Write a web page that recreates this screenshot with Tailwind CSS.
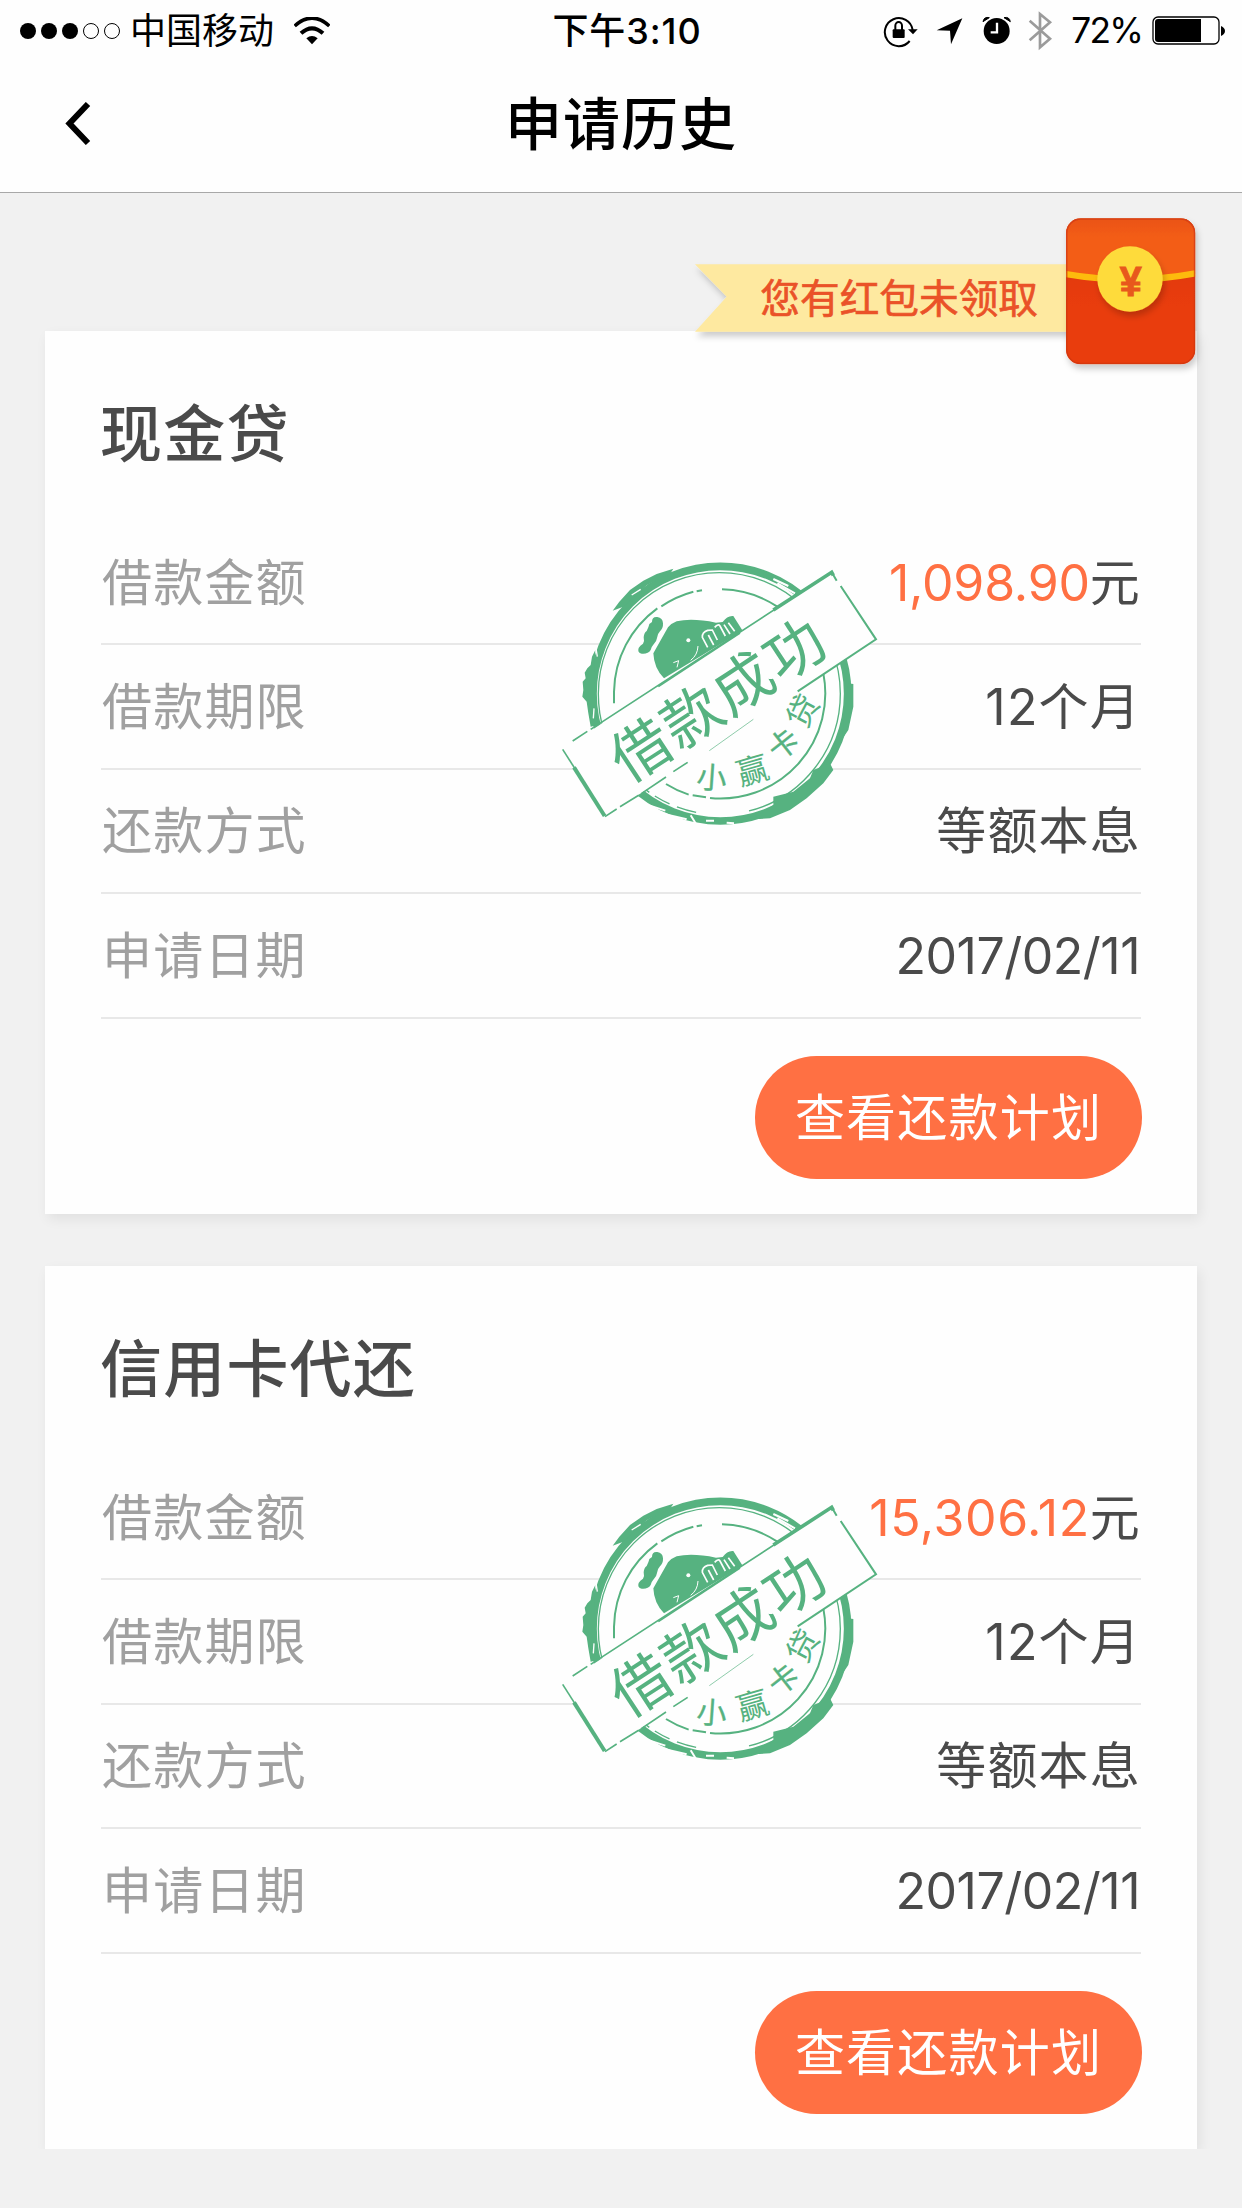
<!DOCTYPE html>
<html lang="zh-CN">
<head>
    <meta charset="UTF-8">
    <meta name="viewport" content="width=device-width, initial-scale=1.0">
    <title>申请历史</title>
    <script src="https://cdn.jsdelivr.net/npm/@tailwindcss/browser@4"></script>
</head>
<body class="bg-[#f1f1f1] font-['Inter','Noto_Sans_CJK_SC',sans-serif] text-[#4a4a4a]">
    <header class="h-[193px] bg-[#fefefe] border-b border-[#a8a8a8] text-black">
        <!-- Status bar -->
        <div class="h-[60px] grid grid-cols-3 items-center text-[36px] leading-[62px]">
            <div class="flex items-center pl-5">
                <svg class="w-[100px] h-[18px]" viewBox="0 0 100 18">
                    <circle cx="8" cy="9" r="8"/>
                    <circle cx="29" cy="9" r="8"/>
                    <circle cx="50" cy="9" r="8"/>
                    <circle cx="71" cy="9" r="7.5" fill="none" stroke="#000"/>
                    <circle cx="92" cy="9" r="7.5" fill="none" stroke="#000"/>
                </svg>
                <span class="ml-[10px]">中国移动</span>
                <svg class="ml-[20px] w-[36px] h-[28px]" viewBox="0 0 108 84">
                    <path d="M2 27 Q54 -20 106 27" fill="none" stroke="#000" stroke-width="11"/>
                    <path d="M21 49 Q54 19 87 49" fill="none" stroke="#000" stroke-width="12"/>
                    <path d="M37 64 Q54 50 71 64 L54 82 Z"/>
                </svg>
            </div>
            <div class="text-center font-medium tracking-[0.9px] pl-[12px]">下午3:10</div>
            <div class="flex items-center justify-end pr-[16px]">
                <svg class="w-[182px] h-[44px] -mt-[2px]" viewBox="0 0 546 132">
                    <!-- rotation lock -->
                    <path d="M80 99 A42 42 0 1 1 89 66" fill="none" stroke="#000" stroke-width="6"/>
                    <path d="M75 64 H104 L90 79 Z"/>
                    <rect x="29" y="64" width="36" height="26" rx="3"/>
                    <path d="M37 66 V53 A10 11 0 0 1 57 53 V66" fill="none" stroke="#000" stroke-width="6"/>
                    <!-- location -->
                    <path d="M238 31 L204 109 L201 68 L161 67 Z"/>
                    <!-- alarm -->
                    <circle cx="341" cy="69" r="39"/>
                    <path d="M342 44 V73 H323" fill="none" stroke="#fff" stroke-width="7"/>
                    <path d="M300 41 Q303 25 319 29 Z M382 41 Q379 25 363 29 Z" stroke="#000" stroke-width="3"/>
                    <!-- bluetooth -->
                    <path d="M440 38 L501 92 L471 118 V18 L501 43 L440 97" fill="none" stroke="#9b9b9b" stroke-width="8"/>
                </svg>
                <span class="ml-[6px] tracking-[-1.8px] text-[35.3px]">72%</span>
                <svg class="ml-[10px] w-[74px] h-[30px]" viewBox="0 0 74 30">
                    <rect x="1" y="1" width="66" height="27" rx="5" fill="none" stroke="#000" stroke-width="1.3"/>
                    <path d="M6 3 H49 V26 H6 Q3 26 3 23 V6 Q3 3 6 3 Z"/>
                    <path d="M69 10 Q73 12 73 15 Q73 18 69 20 Z"/>
                </svg>
            </div>
        </div>
        <!-- Nav bar -->
        <div class="h-[132px] grid grid-cols-3 items-center">
            <svg class="ml-[65px] mt-[-5px] w-[26px] h-[43px]" viewBox="0 0 26 43">
                <path d="M23 2 L4.5 21.5 L23 41" fill="none" stroke="#000" stroke-width="6"/>
            </svg>
            <h1 class="text-[57px] leading-[80px] font-medium text-center tracking-[1px] mt-[-3px]">申请历史</h1>
        </div>
    </header>

    <main class="relative pt-[138px] px-[45px]">
        <!-- Red packet reminder -->
        <svg class="absolute z-10 left-[680px] top-[7px] w-[562px] h-[200px]" viewBox="0 0 1686 600">
            <defs>
                <linearGradient id="flap" x1="0" y1="0" x2="0" y2="1">
                    <stop offset="0" stop-color="#ea5312"/>
                    <stop offset="0.3" stop-color="#f35d15"/>
                    <stop offset="1" stop-color="#f35d15"/>
                </linearGradient>
                <linearGradient id="pocket" x1="0" y1="0" x2="0" y2="1">
                    <stop offset="0" stop-color="#d93512"/>
                    <stop offset="0.6" stop-color="#e93c0d"/>
                    <stop offset="1" stop-color="#e93c0d"/>
                </linearGradient>
                <clipPath id="packet"><rect x="1158" y="55" width="388" height="438" rx="44"/></clipPath>
                <filter id="drop" x="-20%" y="-20%" width="140%" height="150%">
                    <feDropShadow dx="6" dy="14" stdDeviation="10" flood-color="#000" flood-opacity="0.2"/>
                </filter>
            </defs>
            <path d="M45 193 H1180 V395 H45 L140 290 Z" fill="#fee9a0" filter="url(#drop)"/>
            <text x="241" y="338" font-size="119" textLength="833" lengthAdjust="spacing" fill="#ea5228" stroke="#ea5228" stroke-width="2">您有红包未领取</text>
            <g filter="url(#drop)">
                <g clip-path="url(#packet)">
                    <rect x="1158" y="55" width="388" height="438" fill="url(#pocket)"/>
                    <path d="M1158 55 H1546 V222 Q1352 270 1158 222 Z" fill="url(#flap)"/>
                    <path d="M1158 222 Q1352 256 1546 220" fill="none" stroke="#fdbb0b" stroke-width="19"/>
                    <rect x="1160" y="57" width="384" height="434" rx="42" fill="none" stroke="#cf3714" stroke-width="5" opacity="0.7"/>
                </g>
            </g>
            <circle cx="1350" cy="237" r="98" fill="#fedb3b" filter="url(#drop)"/>
            <text x="1352" y="288" font-size="126" font-weight="700" text-anchor="middle" fill="#e8581c" stroke="#e8581c" stroke-width="3" font-family="Liberation Sans" textLength="66" lengthAdjust="spacingAndGlyphs">¥</text>
        </svg>

        <div id="cards" class="flex flex-col gap-[52px]"></div>
    </main>

    <!-- Stamp artwork, shared by every card -->
    <svg class="hidden">
        <symbol id="stamp" viewBox="0 0 1080 900">
            <circle cx="540" cy="461" r="385" fill="#fefefe"/>
            <g fill="none" stroke="#56b280">
                <circle cx="541" cy="461" r="382" stroke-width="23"/>
                <circle cx="538" cy="461" r="363" stroke-width="4" stroke-dasharray="480 160 60 24 50 20 60 30 1500"/>
                <path d="M222 490 V455 A315 315 0 0 1 352 205 M364 199 A315 315 0 0 1 460 155 M470 154 L486 151 M546 148 A315 315 0 0 1 712 200" stroke-width="6"/>
                <path d="M850 400 A315 315 0 0 1 510 774 M498 772 L458 766 M446 764 A315 315 0 0 1 378 732" stroke-width="6"/>
            </g>
            <!-- worn ink on the ring -->
            <path d="M166 330 L156 350 L152 375 L142 385 L134 398 L137 415 L128 425 L130 450 L127 470 L140 485 L145 520 L152 560 L172 555 L165 480 L162 400 Z M218 212 L238 185 L270 150 L310 122 L350 102 L400 86 L390 102 L320 136 L250 200 Z M880 690 L850 730 L800 775 L750 810 L690 835 L640 838 L700 795 L700 770 L760 755 L810 715 L820 690 L870 670 Z M925 430 L940 432 L940 500 L925 570 L905 600 Z" fill="#56b280"/>
            <g fill="none" stroke="#fefefe">
                <path d="M700 117 L745 138 M712 130 L765 160 M330 797 L376 812 M372 822 L440 838 M452 826 L470 855 M498 842 L522 842 M560 848 L582 850" stroke-width="6"/>
                <path d="M168 325 L172 350 M160 535 L162 505 M275 165 L302 148 M920 600 L900 640" stroke-width="4"/>
            </g>
            <!-- mascot -->
            <path d="M336 246 Q336 229 352 231 Q368 233 369 250 Q370 264 360 274 Q352 282 351 294 Q350 305 340 314 Q334 320 332 330 Q324 343 305 341 Q291 338 296 324 Q300 316 309 311 Q314 304 311 292 Q312 278 320 273 Q326 262 328 252 Z" fill="#56b280"/>
            <path d="M384 262 Q394 250 410 244 Q455 233 528 248 L548 246 Q562 226 580 228 L608 272 L372 415 Q342 385 340 340 Z" fill="#56b280"/>
            <g fill="none" stroke="#fefefe" stroke-width="5">
                <path d="M503 322 L487 292 Q486 276 503 271 L517 270 L532 300 M505 285 L521 315 M524 262 Q535 250 540 258 L556 288 M552 254 L570 282 M565 248 L584 274"/>
                <path d="M474 318 Q473 345 452 361 M400 368 L416 362 L411 382" stroke-width="3"/>
            </g>
            <circle cx="445" cy="301" r="6" fill="#fefefe"/>
            <!-- banner -->
            <path d="M68 628 L875 97 L1008 298 L195 830 Z" fill="#fefefe"/>
            <g fill="none" stroke="#56b280" stroke-linejoin="miter">
                <path d="M98 603 L142 574 M152 568 L875 97" stroke-width="5"/>
                <path d="M700 210 L875 97 L880 106" stroke-width="11"/>
                <path d="M877 100 L890 122 M902 138 L1008 298 L773 454" stroke-width="6"/>
                <path d="M640 538 L508 632" stroke-width="2"/>
                <path d="M443 667 L400 695 M378 711 L305 760 M296 766 L240 800 M230 807 L195 830" stroke-width="5"/>
                <path d="M68 628 L110 694" stroke-width="5"/>
                <path d="M102 682 L194 828" stroke-width="12"/>
                <path d="M355 440 L600 279" stroke-width="5"/>
            </g>
            <g fill="#56b280" text-anchor="middle">
                <text transform="translate(532 478) rotate(-33.3)" y="66" font-size="178" textLength="728" lengthAdjust="spacing">借款成功</text>
                <text transform="translate(515 713) rotate(4)" y="33" font-size="90" stroke="#56b280">小</text>
                <text transform="translate(637 690) rotate(-16)" y="36" font-size="96">赢</text>
                <text transform="translate(730 612) rotate(-38)" y="33" font-size="90" stroke="#56b280">卡</text>
                <text transform="translate(788 513) rotate(-62)" y="35" font-size="96">贷</text>
            </g>
        </symbol>
    </svg>

    <script>
        const loans = [
            { title: '现金贷', amount: '1,098.90', amountClass: 'tracking-[-0.2px]', term: '12个月', method: '等额本息', date: '2017/02/11' },
            { title: '信用卡代还', amount: '15,306.12', amountClass: 'tracking-[0.6px]', term: '12个月', method: '等额本息', date: '2017/02/11' }
        ];

        function row(label, value) {
            return `
                <div class="h-[124.4px] border-b-2 border-[#e8e8e8] flex items-center justify-between text-[50px] pt-[2px]">
                    <span class="tracking-[1.2px] text-[#a0a0a0] pl-[1px]">${label}</span>
                    <span class="tracking-[1.2px] text-[#4a4a4a]">${value}</span>
                </div>
            `;
        }

        document.getElementById('cards').innerHTML = loans.map(loan => `
            <section class="relative h-[883px] bg-[#fefefe] px-[56px] pt-[59px] shadow-[3px_5px_12px_rgba(0,0,0,0.07)]">
                <h2 class="text-[62px] leading-[90px] font-medium tracking-[1.2px] -ml-[1px]">${loan.title}</h2>
                <div class="mt-[41px]">
                    ${row('借款金额', `<span class="text-[#ff7043] ${loan.amountClass}">${loan.amount}</span>元`)}
                    ${row('借款期限', loan.term)}
                    ${row('还款方式', loan.method)}
                    ${row('申请日期', `<span class="tracking-[-0.5px] mr-[1px]">${loan.date}</span>`)}
                </div>
                <div class="mt-[37px] flex justify-end">
                    <button class="w-[387px] h-[123px] -mr-[1px] pt-[2px] rounded-full bg-[#ff7043] text-white text-[50px] tracking-[1.2px]">查看还款计划</button>
                </div>
                <svg class="absolute left-[495px] top-[209px] w-[360px] h-[300px]"><use href="#stamp"/></svg>
            </section>
        `).join('');
    </script>
</body>
</html>
